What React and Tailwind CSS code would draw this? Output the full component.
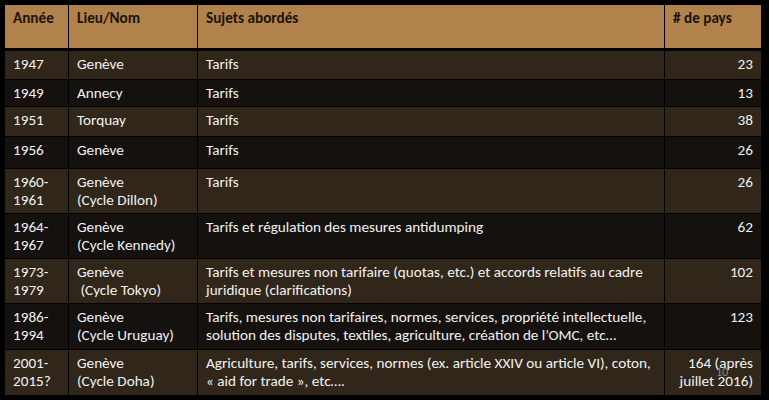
import React from "react";

const rows = [
  { y: ["1947"], l: ["Genève"], s: ["Tarifs"], n: ["23"], h: "h-[29px]", bg: "bg-[#30271a]" },
  { y: ["1949"], l: ["Annecy"], s: ["Tarifs"], n: ["13"], h: "h-[27px]", bg: "bg-[#15110e]" },
  { y: ["1951"], l: ["Torquay"], s: ["Tarifs"], n: ["38"], h: "h-[30px]", bg: "bg-[#30271a]" },
  { y: ["1956"], l: ["Genève"], s: ["Tarifs"], n: ["26"], h: "h-[32px]", bg: "bg-[#15110e]" },
  { y: ["1960-", "1961"], l: ["Genève", "(Cycle Dillon)"], s: ["Tarifs"], n: ["26"], h: "h-[45px]", bg: "bg-[#30271a]" },
  { y: ["1964-", "1967"], l: ["Genève", "(Cycle Kennedy)"], s: ["Tarifs et régulation des mesures antidumping"], n: ["62"], h: "h-[45px]", bg: "bg-[#15110e]" },
  { y: ["1973-", "1979"], l: ["Genève", "\u00a0(Cycle Tokyo)"], s: ["Tarifs et mesures non tarifaire (quotas, etc.) et accords relatifs au cadre", "juridique (clarifications)"], n: ["102"], h: "h-[45px]", bg: "bg-[#30271a]" },
  { y: ["1986-", "1994"], l: ["Genève", "(Cycle Uruguay)"], s: ["Tarifs, mesures non tarifaires, normes, services, propriété intellectuelle,", "solution des disputes, textiles, agriculture, création de l’OMC, etc…"], n: ["123"], h: "h-[46px]", bg: "bg-[#15110e]" },
  { y: ["2001-", "2015?"], l: ["Genève", "(Cycle Doha)"], s: ["Agriculture, tarifs, services, normes (ex. article XXIV ou article VI), coton,", "« aid for trade », etc…."], n: ["164 (après", "juillet 2016)"], h: "h-[45px]", bg: "bg-[#30271a]", last: true },
];

function Lines({ items }) {
  return items.map((t, i) => <div key={i} className="whitespace-nowrap">{t}</div>);
}

export default function App() {
  return (
    <div
      className="relative w-[769px] h-[400px] bg-black overflow-hidden text-[15.2px] leading-[18px]"
      style={{ fontFamily: "Carlito, Lato, 'Open Sans', sans-serif" }}
    >
      <div className="ml-[5px] mt-[5px] w-[756px] flex flex-col">
        <div className="flex h-[46px] bg-[#b1824b] border-b-[3px] border-black font-bold text-[#1b140c]">
          <div className="w-[64px] border-r border-black pl-[8px] pt-[4px]">Année</div>
          <div className="w-[129px] border-r border-black pl-[8px] pt-[4px]">Lieu/Nom</div>
          <div className="w-[467px] border-r border-black pl-[8px] pt-[4px]">Sujets abordés</div>
          <div className="flex-1 pl-[8px] pt-[4px]">
            # de pays
          </div>
        </div>
        {rows.map((r, i) => (
          <div
            key={i}
            className={`flex ${r.h} ${r.bg} ${r.last ? "" : "border-b border-black"} text-[#f2f2f2]`}
          >
            <div className="w-[64px] border-r border-black pl-[8px] pt-[4px]">
              <Lines items={r.y} />
            </div>
            <div className="w-[129px] border-r border-black pl-[8px] pt-[4px]">
              <Lines items={r.l} />
            </div>
            <div className="w-[467px] border-r border-black pl-[8px] pt-[4px]">
              <Lines items={r.s} />
            </div>
            <div className="flex-1 pr-[8px] pt-[4px] text-right">
              <Lines items={r.n} />
            </div>
          </div>
        ))}
      </div>
      <div className="absolute left-[716px] top-[365px] text-[12px] leading-[14px] text-[#8a8a8a]">10</div>
    </div>
  );
}
